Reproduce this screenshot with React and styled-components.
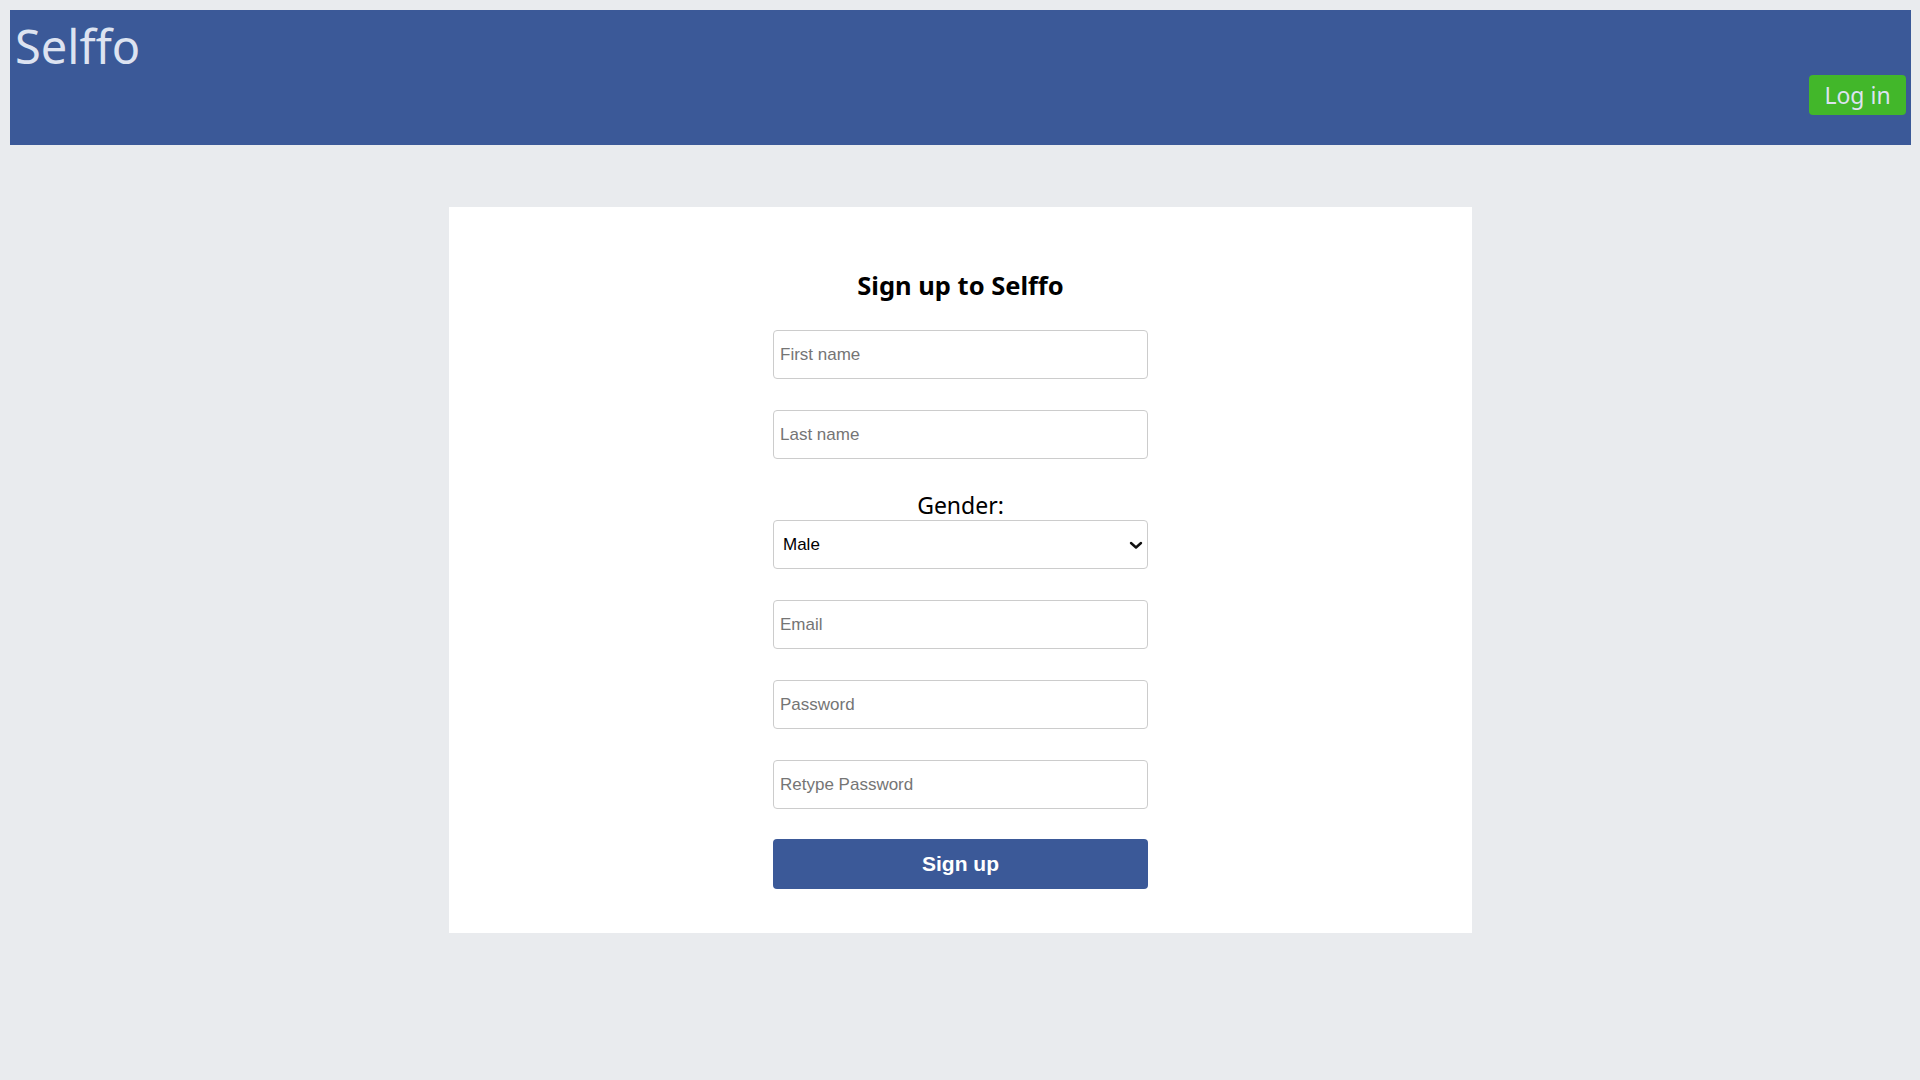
import React from 'react';
import styled, { createGlobalStyle } from 'styled-components';

const GlobalStyle = createGlobalStyle`
  html, body {
    background-color: #e9ebee;
  }
  body {
    margin: 10px 9px 10px 10px;
    font-family: "Noto Sans", "DejaVu Sans", sans-serif;
  }
`;

const Header = styled.header`
  background-color: #3b5998;
  height: 135px;
  display: flex;
  justify-content: space-between;
  align-items: flex-start;
  padding: 0 5px;
  box-sizing: border-box;
`;

const Logo = styled.h1`
  margin: 0;
  font-family: "Noto Sans", "DejaVu Sans", sans-serif;
  font-weight: normal;
  font-size: 47px;
  line-height: 72px;
  color: #dde3f1;
`;

const LoginButton = styled.button`
  margin-top: 65px;
  width: 97px;
  height: 40px;
  background-color: #42b72a;
  border: none;
  border-radius: 4px;
  color: #dde3f1;
  font-family: "Noto Sans", "DejaVu Sans", sans-serif;
  font-size: 23px;
  padding: 0;
  cursor: pointer;
`;

const Main = styled.main`
  display: flex;
  justify-content: center;
  padding-top: 62px;
`;

const Card = styled.div`
  background-color: #ffffff;
  width: 1023px;
  padding: 63px 0 44px;
  box-sizing: border-box;
`;

const Form = styled.form`
  width: 375px;
  margin: 0 auto;
  display: flex;
  flex-direction: column;
  gap: 31px;
`;

const Title = styled.h2`
  margin: 0 0 -1px;
  text-align: center;
  font-family: "Noto Sans", "DejaVu Sans", sans-serif;
  font-weight: bold;
  font-size: 25.5px;
  line-height: 30px;
  color: #000;
`;

const Field = styled.div`
  display: flex;
  flex-direction: column;
`;

const Label = styled.label`
  text-align: center;
  font-family: "Noto Sans", "DejaVu Sans", sans-serif;
  font-size: 23px;
  line-height: 30px;
  color: #000;
`;

const Input = styled.input`
  height: 49px;
  box-sizing: border-box;
  border: 1px solid #cccccc;
  border-radius: 4px;
  padding: 0 6px;
  font-family: "Liberation Sans", Arial, sans-serif;
  font-size: 17px;
  color: #000;
  outline: none;

  &::placeholder {
    color: #757575;
  }
`;

const SelectWrap = styled.div`
  position: relative;
  display: flex;
`;

const Select = styled.select`
  flex: 1;
  height: 49px;
  box-sizing: border-box;
  border: 1px solid #cccccc;
  border-radius: 4px;
  padding: 0 30px 0 9px;
  font-family: "Liberation Sans", Arial, sans-serif;
  font-size: 17px;
  color: #000;
  background-color: #fff;
  outline: none;
  appearance: none;
`;

const Chevron = styled.svg`
  position: absolute;
  right: 4px;
  top: 50%;
  transform: translateY(-50%);
  pointer-events: none;
`;

const SubmitButton = styled.button`
  height: 50px;
  margin-top: -1px;
  border: none;
  border-radius: 4px;
  background-color: #3b5998;
  color: #ffffff;
  font-family: "Liberation Sans", Arial, sans-serif;
  font-weight: bold;
  font-size: 21px;
  cursor: pointer;
`;

const fields = [
  { type: 'text', placeholder: 'First name' },
  { type: 'text', placeholder: 'Last name' },
];

const accountFields = [
  { type: 'email', placeholder: 'Email' },
  { type: 'password', placeholder: 'Password' },
  { type: 'password', placeholder: 'Retype Password' },
];

export default function App() {
  return (
    <>
      <GlobalStyle />
      <Header>
        <Logo>Selffo</Logo>
        <LoginButton>Log in</LoginButton>
      </Header>
      <Main>
        <Card>
          <Form onSubmit={(e) => e.preventDefault()}>
            <Title>Sign up to Selffo</Title>
            {fields.map((f) => (
              <Input key={f.placeholder} type={f.type} placeholder={f.placeholder} />
            ))}
            <Field>
              <Label htmlFor="gender">Gender:</Label>
              <SelectWrap>
                <Select id="gender" defaultValue="male">
                  <option value="male">Male</option>
                  <option value="female">Female</option>
                </Select>
                <Chevron width="16" height="16" viewBox="0 0 16 16">
                  <path d="M3 6l5 4.5L13 6" fill="none" stroke="#111" strokeWidth="2.4" strokeLinecap="round" strokeLinejoin="round" />
                </Chevron>
              </SelectWrap>
            </Field>
            {accountFields.map((f) => (
              <Input key={f.placeholder} type={f.type} placeholder={f.placeholder} />
            ))}
            <SubmitButton type="submit">Sign up</SubmitButton>
          </Form>
        </Card>
      </Main>
    </>
  );
}
